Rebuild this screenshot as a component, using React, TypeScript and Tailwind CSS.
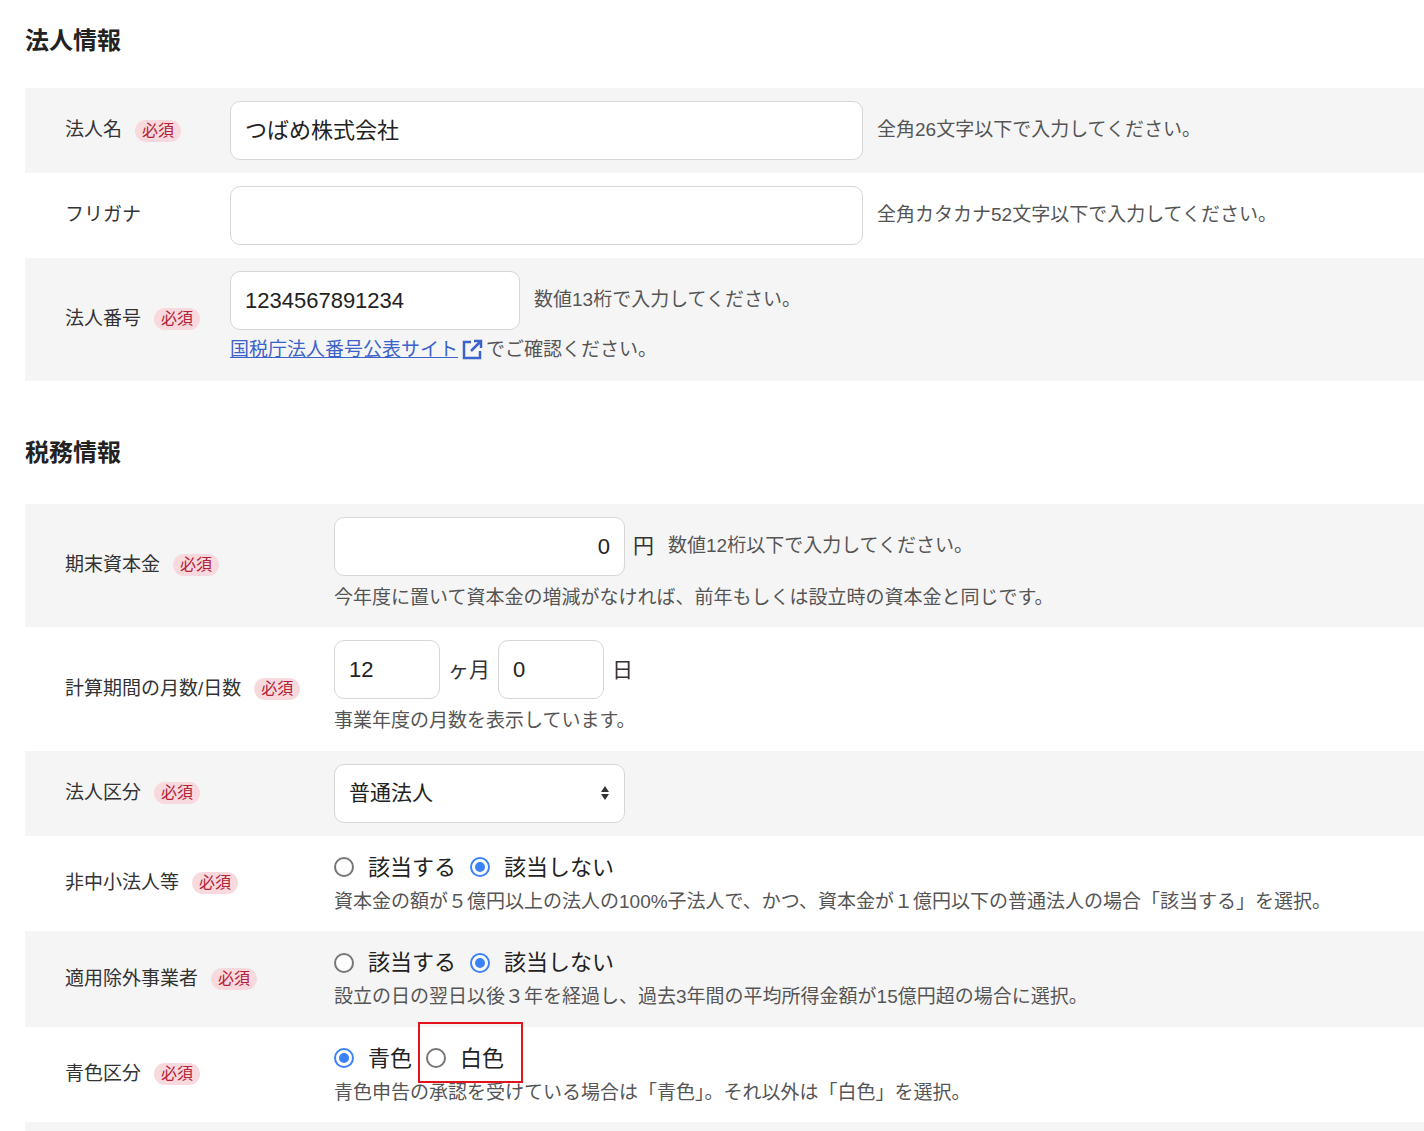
import React from "react";

const F = { fontFamily: '"Liberation Sans", "Noto Sans CJK JP", sans-serif' };

function Badge() {
  return <span className="ml-[13px] rounded-full bg-[#f7d9de] px-[7px] py-[1px] text-[16px] leading-[20px] text-[#b4233a]">必須</span>;
}

function Label({ text, req = true }: { text: string; req?: boolean }) {
  return (
    <div className="flex items-center text-[19px] text-[#333]">
      {text}
      {req && <Badge />}
    </div>
  );
}

function Radio({ checked }: { checked: boolean }) {
  return checked ? (
    <span className="inline-block h-[20px] w-[20px] rounded-full border-[2px] border-[#3b82f6] bg-white p-[3px]">
      <span className="block h-full w-full rounded-full bg-[#3b82f6]" />
    </span>
  ) : (
    <span className="inline-block h-[20px] w-[20px] rounded-full border-[2px] border-[#767676] bg-white" />
  );
}

function Row({ gray, label, col, children }: { gray: boolean; label: React.ReactNode; col: string; children: React.ReactNode }) {
  return (
    <div className={`flex items-center ${gray ? "bg-[#f6f5f5]" : "bg-white"}`}>
      <div className={`pl-[40px] ${col}`}>{label}</div>
      <div className="flex-1 py-[13px]">{children}</div>
    </div>
  );
}

const input = "h-[59px] rounded-[10px] border border-[#d6d6d6] bg-white px-[14px] flex items-center text-[22px] text-[#222]";
const hint = "text-[19px] text-[#555]";

export default function App() {
  const c1 = "w-[205px]";
  const c2 = "w-[309px]";
  return (
    <div style={F} className="bg-white pl-[25px] pb-[10px]">
      <h2 className="pt-[23px] pb-[29px] text-[24px] font-bold leading-[36px] text-[#222]">法人情報</h2>
      <Row gray label={<Label text="法人名" />} col={c1}>
        <div className="flex items-center">
          <div className={`${input} w-[633px]`}>つばめ株式会社</div>
          <span className={`${hint} ml-[14px]`}>全角26文字以下で入力してください。</span>
        </div>
      </Row>
      <Row gray={false} label={<Label text="フリガナ" req={false} />} col={c1}>
        <div className="flex items-center">
          <div className={`${input} w-[633px]`}></div>
          <span className={`${hint} ml-[14px]`}>全角カタカナ52文字以下で入力してください。</span>
        </div>
      </Row>
      <Row gray label={<Label text="法人番号" />} col={c1}>
        <div className="flex items-center">
          <div className={`${input} w-[290px]`}>1234567891234</div>
          <span className={`${hint} ml-[14px]`}>数値13桁で入力してください。</span>
        </div>
        <div className={`${hint} mt-[6px] flex items-center pb-[3px]`}>
          <span className="text-[#3b63c9] underline">国税庁法人番号公表サイト</span>
          <svg width="24" height="24" viewBox="0 0 24 24" className="mx-[2px]" fill="none" stroke="#3b63c9" strokeWidth="2.5">
            <path d="M11 4H4v16h16v-7" />
            <path d="M14 3h7v7M21 3L11 13" />
          </svg>
          <span>でご確認ください。</span>
        </div>
      </Row>

      <h2 className="pt-[54px] pb-[33px] text-[24px] font-bold leading-[36px] text-[#222]">税務情報</h2>
      <Row gray label={<Label text="期末資本金" />} col={c2}>
        <div className="flex items-center">
          <div className={`${input} w-[291px] justify-end`}>0</div>
          <span className="ml-[8px] text-[21px] text-[#333]">円</span>
          <span className={`${hint} ml-[14px]`}>数値12桁以下で入力してください。</span>
        </div>
        <div className={`${hint} mt-[8px] pb-[2px]`}>今年度に置いて資本金の増減がなければ、前年もしくは設立時の資本金と同じです。</div>
      </Row>
      <Row gray={false} label={<Label text="計算期間の月数/日数" />} col={c2}>
        <div className="flex items-center">
          <div className={`${input} w-[106px]`}>12</div>
          <span className="mx-[8px] text-[21px] text-[#333]">ヶ月</span>
          <div className={`${input} w-[106px]`}>0</div>
          <span className="ml-[8px] text-[21px] text-[#333]">日</span>
        </div>
        <div className={`${hint} mt-[8px] pb-[2px]`}>事業年度の月数を表示しています。</div>
      </Row>
      <Row gray label={<Label text="法人区分" />} col={c2}>
        <div className={`${input} w-[291px] justify-between`}>
          <span className="text-[21px]">普通法人</span>
          <svg width="10" height="18" viewBox="0 0 10 18"><path d="M5 2L9 8H1z M5 16L1 10h8z" fill="#333" /></svg>
        </div>
      </Row>
      {[
        { label: "非中小法人等", gray: false, hintText: "資本金の額が５億円以上の法人の100%子法人で、かつ、資本金が１億円以下の普通法人の場合「該当する」を選択。" },
        { label: "適用除外事業者", gray: true, hintText: "設立の日の翌日以後３年を経過し、過去3年間の平均所得金額が15億円超の場合に選択。" },
      ].map((r) => (
        <Row key={r.label} gray={r.gray} label={<Label text={r.label} />} col={c2}>
          <div className="flex items-center pt-[2px] text-[22px] text-[#222]">
            <Radio checked={false} />
            <span className="ml-[14px] mr-[14px]">該当する</span>
            <Radio checked />
            <span className="ml-[14px]">該当しない</span>
          </div>
          <div className={`${hint} mt-[4px] pb-[2px]`}>{r.hintText}</div>
        </Row>
      ))}
      <Row gray={false} label={<Label text="青色区分" />} col={c2}>
        <div className="flex items-center pt-[2px] text-[22px] text-[#222]">
          <Radio checked />
          <span className="ml-[14px] mr-[14px]">青色</span>
          <span className="relative flex items-center">
            <Radio checked={false} />
            <span className="ml-[14px]">白色</span>
            <span className="absolute left-[-8px] top-[-20px] h-[61px] w-[105px] border-2 border-[#e3131d]" />
          </span>
        </div>
        <div className={`${hint} mt-[4px] pb-[2px]`}>青色申告の承認を受けている場合は「青色」。それ以外は「白色」を選択。</div>
      </Row>
      <div className="h-[10px] bg-[#f6f5f5]" />
    </div>
  );
}
